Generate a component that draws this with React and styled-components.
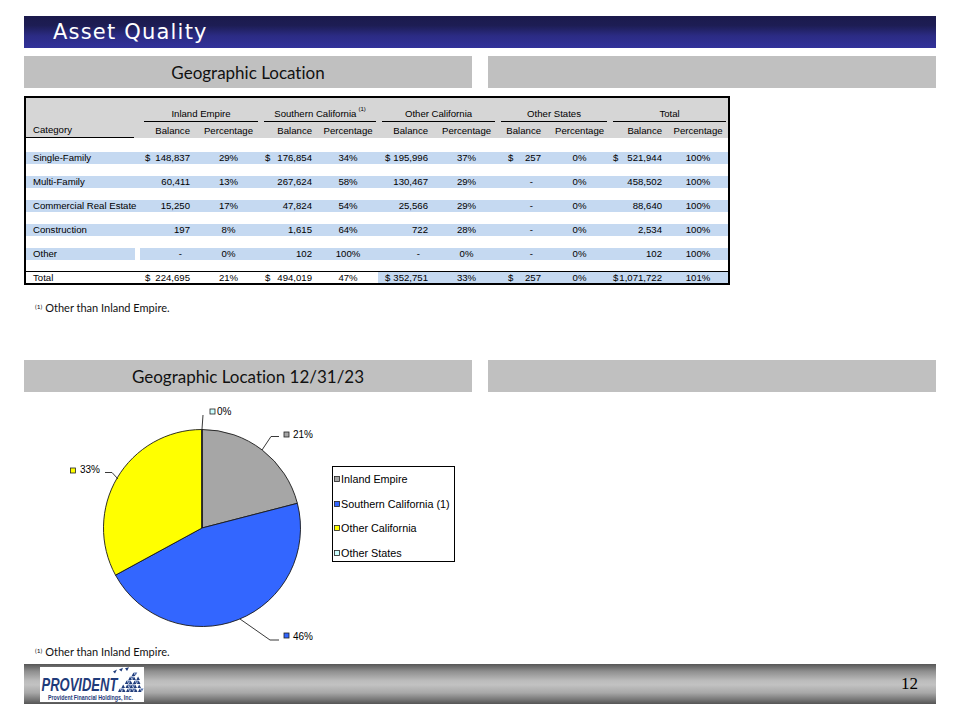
import React from 'react';
import styled, { createGlobalStyle } from 'styled-components';

const GlobalStyle = createGlobalStyle`
  html, body { margin: 0; padding: 0; background: #fff; }
  body { width: 960px; height: 720px; overflow: hidden; font-family: "Liberation Sans", Arial, sans-serif; }
`;

const Page = styled.div`
  width: 960px;
  height: 720px;
  box-sizing: border-box;
  padding: 16px 24px 0;
  display: flex;
  flex-direction: column;
`;

const TitleBar = styled.div`
  height: 32px;
  flex: none;
  background: linear-gradient(to bottom, #1b1a4c 0%, #1d1d54 30%, #2b2b84 62%, #31319a 100%);
  display: flex;
  align-items: center;
  padding-left: 29px;
  font-family: "DejaVu Sans", Verdana, sans-serif;
  font-size: 21px;
  letter-spacing: 1.2px;
  color: #fff;
`;

const SectionRow = styled.div`
  display: grid;
  grid-template-columns: 448px 448px;
  column-gap: 16px;
  margin-top: ${p => p.$top}px;
  flex: none;
`;

const SectionBar = styled.div`
  height: 32px;
  background: #c0c0c0;
  display: flex;
  align-items: center;
  justify-content: center;
  font-family: Lato, "Open Sans", sans-serif;
  font-size: 17px;
  font-variant-ligatures: none;
  color: #111;
`;

const TableFrame = styled.div`
  margin-top: 8px;
  width: 706px;
  box-sizing: border-box;
  border: 2px solid #000;
  flex: none;
`;

const Table = styled.table`
  border-collapse: collapse;
  border-spacing: 0;
  table-layout: fixed;
  width: 702px;
  font-family: "Liberation Sans", Arial, sans-serif;
  font-size: 9.6px;
  color: #000;
`;

const HeadRow = styled.tr`
  background: #d6d6d6;
`;

const Td = styled.td`
  padding: 0;
  background: ${p => (p.$band ? '#c5d9f1' : 'transparent')};
  border-top: ${p => (p.$rule ? '1px solid #000' : 'none')};
  box-shadow: ${p => (p.$notch ? 'inset -5px 0 0 #fff' : 'none')};
`;

const GroupLabel = styled.div`
  height: 24px;
  box-sizing: border-box;
  margin: 0 2px 0 4px;
  border-bottom: 1px solid #000;
  display: flex;
  align-items: flex-end;
  justify-content: center;
  line-height: 12px;
  padding-bottom: 1px;
  white-space: nowrap;
`;

const Sup = styled.span`
  font-size: 6px;
  line-height: 6px;
  align-self: flex-end;
  margin: 0 0 8px 2px;
`;

const SubLabel = styled.div`
  height: 16px;
  box-sizing: border-box;
  display: flex;
  align-items: flex-end;
  justify-content: ${p => p.$align || 'flex-start'};
  line-height: 12px;
  padding: 0 ${p => p.$pr || 0}px 1px ${p => p.$pl || 0}px;
  margin-right: ${p => p.$mr || 0}px;
  border-bottom: ${p => (p.$underline ? '1px solid #000' : 'none')};
  white-space: nowrap;
`;

const Spacer = styled.div`
  height: ${p => p.$h}px;
`;

const CatBox = styled.div`
  height: ${p => p.$h}px;
  line-height: ${p => p.$h}px;
  padding-left: 7px;
  white-space: nowrap;
`;

const BalBox = styled.div`
  height: ${p => p.$h}px;
  line-height: ${p => p.$h}px;
  display: flex;
  justify-content: space-between;
  padding: 0 ${p => p.$pr}px 0 ${p => p.$pl}px;
  white-space: nowrap;
`;

const Dash = styled.span`
  margin-left: auto;
  margin-right: 8px;
`;

const PctBox = styled.div`
  height: ${p => p.$h}px;
  line-height: ${p => p.$h}px;
  text-align: center;
  white-space: nowrap;
`;

const Footnote = styled.div`
  margin-top: ${p => p.$top}px;
  padding-left: 11px;
  line-height: ${p => p.$lh}px;
  height: ${p => p.$lh}px;
  font-family: Lato, "Open Sans", sans-serif;
  font-size: 11px;
  color: #111;
  flex: none;
`;

const NoteMark = styled.span`
  font-size: 6.5px;
  vertical-align: 3px;
  margin-right: 3px;
`;

const ChartSvg = styled.svg`
  display: block;
  flex: none;
`;

const ChartText = styled.text`
  font-family: "Liberation Sans", Arial, sans-serif;
  font-size: ${p => p.$size || 10}px;
  fill: #000;
`;

const Footer = styled.div`
  margin-top: 6px;
  height: 40px;
  flex: none;
  background: linear-gradient(to bottom, #565656 0%, #8e8e8e 18%, #bcbcbc 42%, #c2c2c2 52%, #a8a8a8 72%, #7a7a7a 88%, #555 100%);
  display: flex;
  align-items: center;
  justify-content: space-between;
  padding: 0 18px 0 16px;
`;

const PageNum = styled.div`
  font-family: "Liberation Serif", "Times New Roman", serif;
  font-size: 17px;
  color: #000;
`;

const LogoText = styled.text`
  font-family: "Liberation Sans", Arial, sans-serif;
  font-weight: 700;
  fill: #1f3b7a;
`;

const cols = [
  { w: 114 },
  { w: 57, type: 'bal', pl: 5, pr: 7 },
  { w: 63, type: 'pct' },
  { w: 58, type: 'bal', pl: 5, pr: 6 },
  { w: 60, type: 'pct' },
  { w: 58, type: 'bal', pl: 7, pr: 8 },
  { w: 61, type: 'pct' },
  { w: 53, type: 'bal', pl: 11, pr: 9 },
  { w: 59, type: 'pct' },
  { w: 59, type: 'bal', pl: 4, pr: 6 },
  { w: 60, type: 'pct' },
];

const groups = ['Inland Empire', 'Southern California', 'Other California', 'Other States', 'Total'];

const rows = [
  { cat: 'Single-Family', v: [['$', '148,837'], '29%', ['$', '176,854'], '34%', ['$', '195,996'], '37%', ['$', '257'], '0%', ['$', '521,944'], '100%'] },
  { cat: 'Multi-Family', v: ['60,411', '13%', '267,624', '58%', '130,467', '29%', '-', '0%', '458,502', '100%'] },
  { cat: 'Commercial Real Estate', v: ['15,250', '17%', '47,824', '54%', '25,566', '29%', '-', '0%', '88,640', '100%'] },
  { cat: 'Construction', v: ['197', '8%', '1,615', '64%', '722', '28%', '-', '0%', '2,534', '100%'] },
  { cat: 'Other', v: ['-', '0%', '102', '100%', '-', '0%', '-', '0%', '102', '100%'], notch: true },
];

const total = { cat: 'Total', v: [['$', '224,695'], '21%', ['$', '494,019'], '47%', ['$', '352,751'], '33%', ['$', '257'], '0%', ['$', '1,071,722'], '101%'] };

function ValueCell({ col, value, h }) {
  if (col.type === 'bal') {
    if (Array.isArray(value)) {
      return (
        <BalBox $h={h} $pl={col.pl} $pr={col.pr}>
          <span>{value[0]}</span>
          <span>{value[1]}</span>
        </BalBox>
      );
    }
    if (value === '-') {
      return (
        <BalBox $h={h} $pl={col.pl} $pr={col.pr}>
          <Dash>-</Dash>
        </BalBox>
      );
    }
    return (
      <BalBox $h={h} $pl={col.pl} $pr={col.pr}>
        <span />
        <span>{value}</span>
      </BalBox>
    );
  }
  return <PctBox $h={h}>{value}</PctBox>;
}

function DataRow({ row }) {
  return (
    <tr>
      <Td $band $notch={row.notch}>
        <CatBox $h={12}>{row.cat}</CatBox>
      </Td>
      {row.v.map((val, i) => (
        <Td key={i} $band>
          <ValueCell col={cols[i + 1]} value={val} h={12} />
        </Td>
      ))}
    </tr>
  );
}

function GapRow({ h }) {
  return (
    <tr>
      <Td colSpan={11}>
        <Spacer $h={h} />
      </Td>
    </tr>
  );
}

function LocationTable() {
  return (
    <TableFrame>
      <Table>
        <colgroup>
          {cols.map((c, i) => (
            <col key={i} style={{ width: c.w }} />
          ))}
        </colgroup>
        <tbody>
          <HeadRow>
            <Td>
              <Spacer $h={24} />
            </Td>
            {groups.map((g, i) => (
              <Td key={g} colSpan={2}>
                <GroupLabel>
                  {g}
                  {i === 1 && <Sup>(1)</Sup>}
                </GroupLabel>
              </Td>
            ))}
          </HeadRow>
          <HeadRow>
            <Td>
              <SubLabel $pl={7} $mr={6} $underline>
                Category
              </SubLabel>
            </Td>
            {cols.slice(1).map((c, i) => (
              <Td key={i}>
                {c.type === 'bal' ? (
                  <SubLabel $align="flex-end" $pr={c.pr}>
                    Balance
                  </SubLabel>
                ) : (
                  <SubLabel $align="center">Percentage</SubLabel>
                )}
              </Td>
            ))}
          </HeadRow>
          <GapRow h={14} />
          {rows.map((r, i) => (
            <React.Fragment key={r.cat}>
              <DataRow row={r} />
              <GapRow h={i === rows.length - 1 ? 11 : 12} />
            </React.Fragment>
          ))}
          <tr>
            <Td $rule>
              <CatBox $h={11}>{total.cat}</CatBox>
            </Td>
            {total.v.map((val, i) => (
              <Td key={i} $rule $band={i >= 4}>
                <ValueCell col={cols[i + 1]} value={val} h={11} />
              </Td>
            ))}
          </tr>
        </tbody>
      </Table>
    </TableFrame>
  );
}

const legendItems = [
  { label: 'Inland Empire', color: '#a6a6a6', y: 479 },
  { label: 'Southern California (1)', color: '#3366ff', y: 504 },
  { label: 'Other California', color: '#ffff00', y: 528 },
  { label: 'Other States', color: '#ccffff', y: 553 },
];

function PieChart() {
  return (
    <ChartSvg viewBox="24 392 448 252" width="448" height="252">
      <g stroke="#1a1a1a" strokeWidth="0.9" strokeLinejoin="round">
        <path d="M202 528 L202 429.5 A98.5 98.5 0 0 1 297.36 503.31 Z" fill="#a6a6a6" />
        <path d="M202 528 L297.36 503.31 A98.5 98.5 0 0 1 115.5 575.12 Z" fill="#3366ff" />
        <path d="M202 528 L115.5 575.12 A98.5 98.5 0 0 1 201.85 429.5 Z" fill="#ffff00" />
        <path d="M202 528 L201.85 429.5 L202 429.5 Z" fill="#ccffff" />
      </g>
      <g stroke="#222" strokeWidth="0.9" fill="none">
        <polyline points="202,429 203,415" />
        <polyline points="262,450 271,436.5 279,436.5" />
        <polyline points="118,479 112,472.5 105,472.5" />
        <polyline points="240,619 270,640 279,640" />
      </g>
      <g stroke="#222" strokeWidth="0.8">
        <rect x="210" y="409" width="5" height="5" fill="#ccffff" />
        <rect x="284" y="432" width="5" height="5" fill="#a6a6a6" />
        <rect x="70.5" y="468" width="5" height="5" fill="#ffff00" />
        <rect x="284" y="633" width="5" height="5" fill="#3366ff" />
      </g>
      <ChartText x="217" y="415">0%</ChartText>
      <ChartText x="293" y="438">21%</ChartText>
      <ChartText x="80" y="473">33%</ChartText>
      <ChartText x="293" y="639.5">46%</ChartText>
      <rect x="332.5" y="466.5" width="122" height="95" fill="#fff" stroke="#000" strokeWidth="1" />
      {legendItems.map(it => (
        <g key={it.label}>
          <rect x="334.5" y={it.y - 2.5} width="5" height="5" fill={it.color} stroke="#222" strokeWidth="0.8" />
          <ChartText x="341" y={it.y + 3.8} $size={10.8}>
            {it.label}
          </ChartText>
        </g>
      ))}
    </ChartSvg>
  );
}

function buildMosaic() {
  const tris = [];
  const left = y => 96 - (y - 4) * (18 / 21);
  const right = y => 96 + (y - 4) * (7.5 / 21);
  let k = 0;
  for (let y0 = 5; y0 < 25; y0 += 4) {
    const yb = y0 + 4;
    const xl = left(yb);
    const xr = right(yb);
    for (let x = xl; x + 3.5 <= xr + 0.6; x += 4) {
      k += 1;
      tris.push({ pts: `${x},${yb} ${x + 3.6},${yb} ${x + 1.8},${y0 + 0.4}`, fill: '#1f3b7a' });
      if (x + 5.6 <= xr + 0.3) {
        tris.push({ pts: `${x + 2.2},${y0 + 0.4} ${x + 5.6},${y0 + 0.4} ${x + 3.9},${yb - 0.4}`, fill: k % 3 === 0 ? '#ffffff' : '#5673ad' });
      }
    }
  }
  return tris;
}

const mosaic = buildMosaic();

function Logo() {
  return (
    <svg width="104" height="35" viewBox="0 0 104 35">
      <rect x="0" y="0" width="104" height="35" fill="#fff" />
      <g transform="translate(1.5 24) scale(1 1.45)">
        <LogoText x="0" y="0" fontSize="13" fontStyle="italic">
          PROVIDENT
        </LogoText>
      </g>
      <g fill="#1f3b7a">
        <polygon points="73,4.5 77,2.5 75,6.5" />
        <polygon points="79,2.5 83,0.8 81.5,4.5" />
        <polygon points="85,1.2 89,0.3 87,4" />
        {mosaic.map((t, i) => (
          <polygon key={i} points={t.pts} fill={t.fill} />
        ))}
      </g>
      <g transform="translate(8 32.5) scale(1 1.2)">
        <LogoText x="0" y="0" fontSize="5.3">
          Provident Financial Holdings, Inc.
        </LogoText>
      </g>
    </svg>
  );
}

export default function App() {
  return (
    <>
      <GlobalStyle />
      <Page>
        <TitleBar>Asset Quality</TitleBar>
        <SectionRow $top={8}>
          <SectionBar>Geographic Location</SectionBar>
          <SectionBar />
        </SectionRow>
        <LocationTable />
        <Footnote $top={16} $lh={12}>
          <NoteMark>(1)</NoteMark>Other than Inland Empire.
        </Footnote>
        <SectionRow $top={47}>
          <SectionBar>Geographic Location 12/31/23</SectionBar>
          <SectionBar />
        </SectionRow>
        <PieChart />
        <Footnote $top={0} $lh={14}>
          <NoteMark>(1)</NoteMark>Other than Inland Empire.
        </Footnote>
        <Footer>
          <Logo />
          <PageNum>12</PageNum>
        </Footer>
      </Page>
    </>
  );
}
